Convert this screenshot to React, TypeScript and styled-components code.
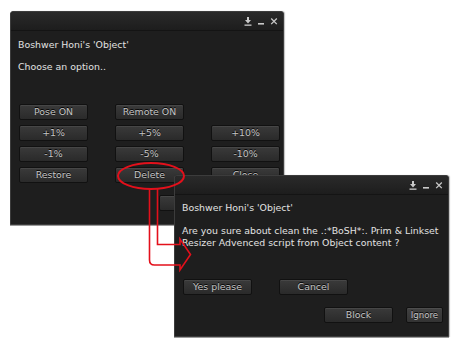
import styled, { createGlobalStyle } from "styled-components";

const GlobalStyle = createGlobalStyle`
    html, body {
        margin: 0;
        padding: 0;
        background: #ffffff;
    }
`;

const Desktop = styled.div`
    position: relative;
    width: 460px;
    height: 345px;
    overflow: hidden;
    background: #ffffff;
    font-family: "DejaVu Sans", "Liberation Sans", sans-serif;
`;

const Floater = styled.div<{ $x: number; $y: number; $w: number; $h: number }>`
    position: absolute;
    left: ${(p) => p.$x}px;
    top: ${(p) => p.$y}px;
    width: ${(p) => p.$w}px;
    height: ${(p) => p.$h}px;
    box-sizing: border-box;
    display: flex;
    flex-direction: column;
    background: #1e1e1e;
    border: 1px solid #3c3c3c;
    border-radius: 3px 3px 0 0;
    box-shadow: 0 1px 0 #9a9a9a, 1px 0 1px rgba(0, 0, 0, 0.25);
`;

const TitleBar = styled.div`
    height: 18px;
    flex: none;
    display: flex;
    justify-content: flex-end;
    align-items: center;
    gap: 5px;
    padding-right: 5px;
    background: linear-gradient(#2a2a2a, #1d1d1d);
    border-bottom: 1px solid #141414;
    border-radius: 3px 3px 0 0;
`;

const Body = styled.div<{ $top: number }>`
    flex: 1;
    display: flex;
    flex-direction: column;
    padding: ${(p) => p.$top}px 3px 0 7px;
    color: #e2e2e2;
    font-size: 9.4px;
    line-height: 12px;
`;

const Line = styled.div<{ $gap?: number }>`
    margin-top: ${(p) => p.$gap ?? 0}px;
    white-space: nowrap;
`;

const Message = styled.div`
    margin-top: 11px;
    line-height: 11.5px;
`;

const ButtonGrid = styled.div<{ $top: number }>`
    display: grid;
    grid-template-columns: repeat(3, 69px);
    column-gap: 27px;
    row-gap: 5px;
    margin-top: ${(p) => p.$top}px;
    padding-left: 1px;
`;

const BottomRow = styled.div`
    display: flex;
    justify-content: flex-end;
    gap: 13px;
    margin-top: 12px;
    padding-right: 2px;
`;

const Btn = styled.div<{ $narrow?: boolean }>`
    box-sizing: border-box;
    height: 16px;
    width: ${(p) => (p.$narrow ? "37px" : "69px")};
    display: flex;
    align-items: center;
    justify-content: center;
    background: ${(p) =>
        p.$narrow ? "linear-gradient(#414141, #333333)" : "linear-gradient(#3a3a3a, #2a2a2a)"};
    border: 1px solid #111111;
    border-radius: 2px;
    box-shadow: inset 0 1px 0 rgba(255, 255, 255, 0.07);
    color: #c4c4c4;
    font-size: ${(p) => (p.$narrow ? "8.6px" : "9.4px")};
    text-shadow: 0 -1px 0 #000;
    white-space: nowrap;
`;

const Icon = styled.svg`
    display: block;
    width: 8px;
    height: 9px;
`;

const Overlay = styled.svg`
    position: absolute;
    left: 0;
    top: 0;
    pointer-events: none;
`;

function TitleIcons() {
    return (
        <>
            <Icon viewBox="0 0 8 9">
                <path d="M3 0h2v3h2L4 6.5 1 3h2z" fill="#c9c9c9" />
                <rect x="0.5" y="7.5" width="7" height="1.3" fill="#c9c9c9" />
            </Icon>
            <Icon viewBox="0 0 8 9">
                <rect x="1" y="6" width="6" height="1.6" fill="#c9c9c9" />
            </Icon>
            <Icon viewBox="0 0 8 9">
                <path d="M1.2 1.5l5.6 5.6M6.8 1.5L1.2 7.1" stroke="#c9c9c9" strokeWidth="1.3" />
            </Icon>
        </>
    );
}

const firstRows = [
    ["Pose ON", "Remote ON", ""],
    ["+1%", "+5%", "+10%"],
    ["-1%", "-5%", "-10%"],
    ["Restore", "Delete", "Close"],
];

export default function App() {
    return (
        <Desktop>
            <GlobalStyle />
            <Floater $x={10} $y={11} $w={274} $h={214}>
                <TitleBar>
                    <TitleIcons />
                </TitleBar>
                <Body $top={8}>
                    <Line>Boshwer Honi's 'Object'</Line>
                    <Line $gap={10}>Choose an option..</Line>
                    <ButtonGrid $top={31}>
                        {firstRows.flat().map((label, i) =>
                            label ? <Btn key={i}>{label}</Btn> : <span key={i} />
                        )}
                    </ButtonGrid>
                    <BottomRow>
                        <Btn>Block</Btn>
                        <Btn $narrow>Ignore</Btn>
                    </BottomRow>
                </Body>
            </Floater>

            <Floater $x={174} $y={175} $w={275} $h={162}>
                <TitleBar>
                    <TitleIcons />
                </TitleBar>
                <Body $top={7}>
                    <Line>Boshwer Honi's 'Object'</Line>
                    <Message>
                        Are you sure about clean the .:*BoSH*:. Prim &amp; Linkset
                        <br />
                        Resizer Advenced script from Object content ?
                    </Message>
                    <ButtonGrid $top={31}>
                        <Btn>Yes please</Btn>
                        <Btn>Cancel</Btn>
                    </ButtonGrid>
                    <BottomRow>
                        <Btn>Block</Btn>
                        <Btn $narrow>Ignore</Btn>
                    </BottomRow>
                </Body>
            </Floater>

            <Overlay width="460" height="345" viewBox="0 0 460 345">
                <ellipse cx="151" cy="176" rx="33" ry="13" fill="none" stroke="#e3101b" strokeWidth="2" />
                <path
                    d="M149.5 189 V260 Q149.5 265 154.5 265 H180 V270 L190.5 254.5 L180 239 V244.5 H157.5 V189"
                    fill="none"
                    stroke="#e3101b"
                    strokeWidth="1.6"
                    strokeLinejoin="miter"
                />
            </Overlay>
        </Desktop>
    );
}
